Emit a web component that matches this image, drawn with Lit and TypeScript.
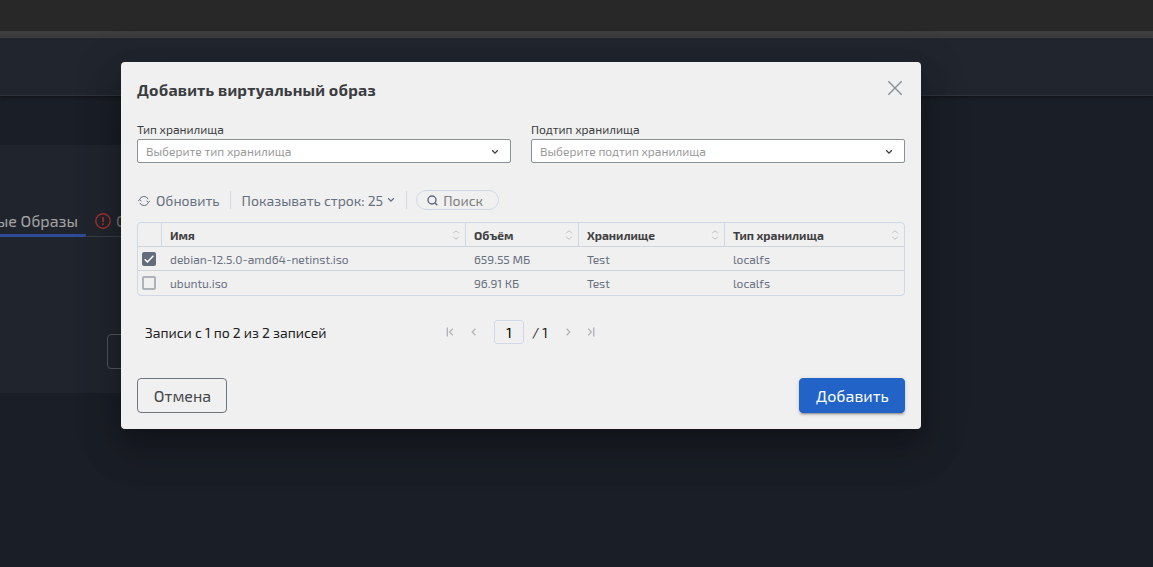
import { LitElement, html, css, svg } from "lit";
import { customElement, state } from "lit/decorators.js";

interface ImageRow {
  name: string;
  size: string;
  storage: string;
  type: string;
  checked: boolean;
}

const icon = (w: number, h: number, body: unknown) =>
  html`<svg class="icon" width=${w} height=${h} viewBox="0 0 ${w} ${h}">${body}</svg>`;

const chevronDown = () =>
  icon(8, 6, svg`<path d="M1.2 1.3 4 4.1 6.8 1.3" fill="none" stroke="currentColor" stroke-width="1.3"/>`);

const sorter = () =>
  icon(8, 10, svg`<path d="M1.2 3.3 2.8 1.5q1.2-1 2.4 0l1.6 1.8M1.2 6.7l1.6 1.8q1.2 1 2.4 0l1.6-1.8" fill="none" stroke="currentColor"/>`);

@customElement("app-root")
export class AppRoot extends LitElement {
  static styles = css`
    :host {
      display: block;
      position: relative;
      width: 100%;
      height: 567px;
      overflow: hidden;
      background: #1a1e26;
      font: 12px/16px "Exo 2", "Noto Sans", sans-serif;
      color: #3b3d41;
    }
    .icon { display: block; flex: none; }
    .frame { height: 31px; background: #282828; }
    .strip { height: 6px; background: #3d3d3d; border-bottom: 1px solid #44474a; }
    .header {
      height: 57px;
      background: #20252e;
      border-bottom: 1px solid #2e323b;
      box-shadow: 0 1px 3px #111418;
    }
    .panel {
      margin-top: 49px;
      height: 248px;
      width: 530px;
      background: #20252d;
      display: flex;
      flex-direction: column;
    }
    .tabs {
      margin-top: 62px;
      height: 29px;
      display: flex;
      border-bottom: 1px solid #3b3e42;
      font-size: 16px;
      line-height: 28px;
      color: #a3a3a3;
      white-space: nowrap;
    }
    .tab {
      width: 86px;
      height: 27px;
      border-bottom: 3px solid #304c98;
      border-radius: 0 0 2px 0;
      display: flex;
      justify-content: flex-end;
      box-sizing: content-box;
    }
    .tab.current span { padding-right: 8px; }
    .tab.next {
      justify-content: flex-start;
      border: 0;
      gap: 5px;
      padding-left: 9px;
      color: #6f7175;
    }
    .alert { color: #a3302f; padding-top: 6px; }
    .ghost {
      margin: 97px 0 0 107px;
      width: 120px;
      height: 33px;
      border: 1px solid #53565b;
      border-radius: 4px;
    }
    .overlay {
      position: absolute;
      inset: 0;
      padding: 62px 0 0 121px;
    }
    .dialog {
      box-sizing: border-box;
      width: 800px;
      height: 367px;
      padding: 16px;
      border-radius: 4px;
      background: #f0f0f0;
      box-shadow: 0 11px 15px -7px #0003, 0 24px 38px 3px #00000024, 0 9px 46px 8px #0000001f;
      display: flex;
      flex-direction: column;
    }
    .title {
      display: flex;
      justify-content: space-between;
      height: 43px;
      font-size: 16px;
      line-height: 24px;
      font-weight: 700;
      letter-spacing: 0.2px;
    }
    .close { color: #8a8f94; padding: 2px 2px 0 0; }
    .fields { display: grid; grid-template-columns: 1fr 1fr; gap: 20px; }
    .select {
      margin-top: 2px;
      box-sizing: border-box;
      height: 24px;
      border: 1px solid #8b9198;
      border-radius: 2px;
      background: #fff;
      display: flex;
      align-items: center;
      justify-content: space-between;
      padding: 0 11px 0 8px;
      color: #999;
    }
    .select .icon { color: #3b3d41; margin-top: 2px; }
    .toolbar {
      margin-top: 27px;
      height: 20px;
      display: flex;
      align-items: center;
      font-size: 14px;
      line-height: 20px;
      color: #687080;
    }
    .toolbar .label { padding-top: 2px; }
    .refresh { display: flex; align-items: center; gap: 6px; padding: 0 10px 0 1px; }
    .refresh .icon { margin-top: 2px; }
    .lines {
      display: flex;
      align-items: center;
      gap: 4px;
      padding: 0 11px 0 11px;
    }
    .divider { width: 1px; height: 18px; background: #d0d7e6; }
    .search {
      margin-left: 9px;
      box-sizing: border-box;
      width: 83px;
      height: 20px;
      border: 1px solid #d0d7e6;
      border-radius: 10px;
      display: flex;
      align-items: center;
      gap: 5px;
      padding-left: 10px;
      color: #808080;
    }
    .search .icon { color: #5f687a; }
    .table {
      margin-top: 12px;
      border: 1px solid #d0d7e6;
      border-radius: 4px;
      height: 72px;
      color: #687080;
    }
    .row {
      display: grid;
      grid-template-columns: 24px 304px 113px 146px 179px;
      height: 23px;
      border-bottom: 1px solid #cfd3da;
    }
    .row:last-child { border: 0; }
    .cell {
      display: flex;
      align-items: center;
      justify-content: space-between;
      padding: 1px 5px 0 8px;
      box-sizing: border-box;
    }
    .cell.pick { padding: 0 0 0 4px; }
    .head { font-weight: 700; color: #3f4042; }
    .head .cell { border-right: 1px solid #d0d7e6; }
    .head .cell:last-child { border: 0; }
    .head .icon { color: #bfc1c4; margin-top: -1px; }
    .box {
      width: 10px;
      height: 10px;
      border: 2px solid #aeb2b9;
      border-radius: 2px;
    }
    .box.on { background: #646d7c; border-color: #646d7c; }
    .pager {
      margin-top: 24px;
      height: 24px;
      display: flex;
      align-items: center;
      font-size: 14px;
      color: #222;
      padding-left: 8px;
    }
    .summary { width: 301px; padding-top: 2px; }
    .pager .icon { color: #b3b5b8; }
    .prev { margin: 0 16px 0 16px; }
    .page {
      width: 28px;
      height: 22px;
      border: 1px solid #d0d7e6;
      border-radius: 3px;
      line-height: 24px;
      text-align: center;
      color: #000;
    }
    .total { padding: 2px 16px 0 8px; white-space: pre; }
    .last { margin-left: 15px; }
    .actions { margin-top: 34px; display: flex; justify-content: space-between; }
    .button {
      box-sizing: border-box;
      height: 35px;
      border: 1px solid #70767e;
      border-radius: 4px;
      background: none;
      padding: 1px 0 0 1px;
      width: 90px;
      font: 16px/20px "Exo 2", "Noto Sans", sans-serif;
      color: #46484c;
      letter-spacing: 0.02px;
    }
    .button.primary {
      width: 106px;
      border-color: #2263c8;
      background: #2263c8;
      color: #fff;
      box-shadow: 0 3px 1px -2px #0003, 0 2px 2px #00000024, 0 1px 5px #0000001f;
    }
  `;

  @state() private rows: ImageRow[] = [
    { name: "debian-12.5.0-amd64-netinst.iso", size: "659.55 МБ", storage: "Test", type: "localfs", checked: true },
    { name: "ubuntu.iso", size: "96.91 КБ", storage: "Test", type: "localfs", checked: false },
  ];

  private toggle(index: number) {
    this.rows = this.rows.map((r, i) => (i === index ? { ...r, checked: !r.checked } : r));
  }

  private field(label: string, placeholder: string) {
    return html`<div>
      <div>${label}</div>
      <div class="select"><span>${placeholder}</span>${chevronDown()}</div>
    </div>`;
  }

  private arrow(d: string, bar = "") {
    return icon(8, 10, svg`<path d=${d} fill="none" stroke="currentColor" stroke-width="1.3"/>
      <path d=${bar} fill="none" stroke="currentColor" stroke-width="1.4"/>`);
  }

  render() {
    return html`
      <div class="frame"></div>
      <div class="strip"></div>
      <div class="header"></div>
      <div class="panel">
        <div class="tabs">
          <div class="tab current"><span>ые Образы</span></div>
          <div class="tab next">
            <span class="alert">${icon(16, 16, svg`<circle cx="8" cy="8" r="7.2" fill="none" stroke="currentColor" stroke-width="1.4"/><path d="M8 4v5M8 10.3v1.7" stroke="currentColor" stroke-width="1.8"/>`)}</span>
            <span>О</span>
          </div>
        </div>
        <div class="ghost"></div>
      </div>
      <div class="overlay">
        <div class="dialog">
          <div class="title">
            <span>Добавить виртуальный образ</span>
            <span class="close">${icon(16, 16, svg`<path d="M1.3 1.3 14.7 14.7M14.7 1.3 1.3 14.7" stroke="currentColor" stroke-width="1.4"/>`)}</span>
          </div>
          <div class="fields">
            ${this.field("Тип хранилища", "Выберите тип хранилища")}
            ${this.field("Подтип хранилища", "Выберите подтип хранилища")}
          </div>
          <div class="toolbar">
            <span class="refresh">${icon(12, 12, svg`<path d="M1.6 4.6A4.6 4.6 0 0 1 10.2 4.2M10.4 7.4A4.6 4.6 0 0 1 1.8 7.8M0 6.3l1.6-1.8L3.4 6.3M8.6 5.7l1.8 1.8L12 5.7" fill="none" stroke="currentColor"/>`)}<span class="label">Обновить</span></span>
            <span class="divider"></span>
            <span class="lines"><span class="label">Показывать строк: 25</span>${chevronDown()}</span>
            <span class="divider"></span>
            <span class="search">${icon(11, 11, svg`<circle cx="5" cy="5" r="4" fill="none" stroke="currentColor" stroke-width="1.4"/><path d="m7.8 7.8 2.5 2.5" stroke="currentColor" stroke-width="1.5"/>`)}<span class="label">Поиск</span></span>
          </div>
          <div class="table">
            <div class="row head">
              <div class="cell"></div>
              ${["Имя", "Объём", "Хранилище", "Тип хранилища"].map((t) => html`<div class="cell"><span>${t}</span>${sorter()}</div>`)}
            </div>
            ${this.rows.map((r, i) => html`<div class="row">
              <div class="cell pick" @click=${() => this.toggle(i)}>
                <span class="box ${r.checked ? "on" : ""}">${r.checked ? icon(10, 10, svg`<path d="m.7 5.2 2.7 2.7L9.4 1.7" fill="none" stroke="#fff" stroke-width="1.5"/>`) : ""}</span>
              </div>
              <div class="cell">${r.name}</div>
              <div class="cell">${r.size}</div>
              <div class="cell">${r.storage}</div>
              <div class="cell">${r.type}</div>
            </div>`)}
          </div>
          <div class="pager">
            <span class="summary">Записи с 1 по 2 из 2 записей</span>
            ${this.arrow("M6.8 1.8 3.6 5 6.8 8.2", "M1.3 0.5v9")}
            <span class="prev">${this.arrow("M5.4 1.8 2.2 5 5.4 8.2")}</span>
            <span class="page">1</span>
            <span class="total">/ 1</span>
            ${this.arrow("M2.6 1.8 5.8 5 2.6 8.2")}
            <span class="last">${this.arrow("M1.2 1.8 4.4 5 1.2 8.2", "M6.7 0.5v9")}</span>
          </div>
          <div class="actions">
            <button class="button">Отмена</button>
            <button class="button primary">Добавить</button>
          </div>
        </div>
      </div>
    `;
  }
}
